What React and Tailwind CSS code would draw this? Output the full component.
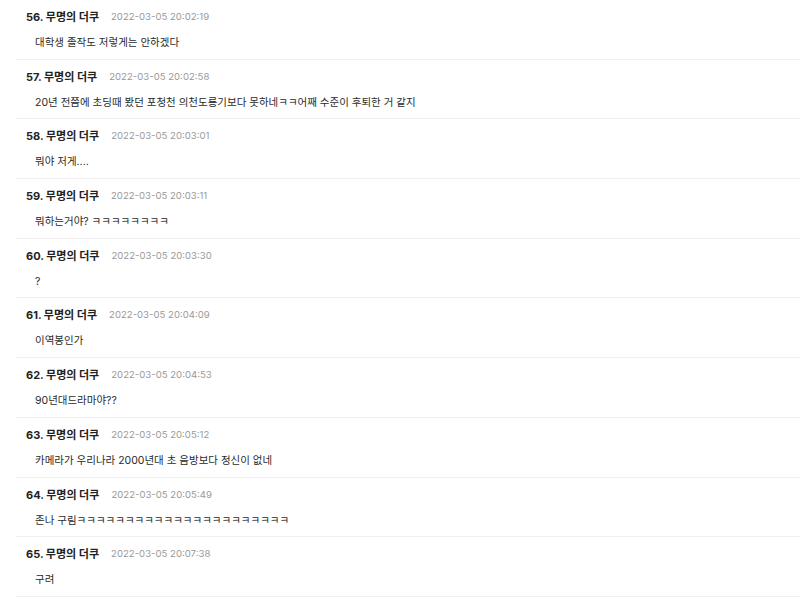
import React from 'react';

const comments = [
  { no: 56, time: "2022-03-05 20:02:19", text: "대학생 졸작도 저렇게는 안하겠다" },
  { no: 57, time: "2022-03-05 20:02:58", text: "20년 전쯤에 초딩때 봤던 포청천 의천도룡기보다 못하네ㅋㅋ어째 수준이 후퇴한 거 같지" },
  { no: 58, time: "2022-03-05 20:03:01", text: "뭐야 저게...." },
  { no: 59, time: "2022-03-05 20:03:11", text: "뭐하는거야? ㅋㅋㅋㅋㅋㅋㅋㅋ" },
  { no: 60, time: "2022-03-05 20:03:30", text: "?" },
  { no: 61, time: "2022-03-05 20:04:09", text: "이역봉인가" },
  { no: 62, time: "2022-03-05 20:04:53", text: "90년대드라마야??" },
  { no: 63, time: "2022-03-05 20:05:12", text: "카메라가 우리나라 2000년대 초 음방보다 정신이 없네" },
  { no: 64, time: "2022-03-05 20:05:49", text: "존나 구림ㅋㅋㅋㅋㅋㅋㅋㅋㅋㅋㅋㅋㅋㅋㅋㅋㅋㅋㅋㅋㅋㅋ" },
  { no: 65, time: "2022-03-05 20:07:38", text: "구려" },
];

export default function App() {
  return (
    <div className="w-[800px] h-[601px] overflow-hidden bg-white font-['Inter','Noto_Sans_CJK_KR',sans-serif]">
      <div className="ml-4">
        {comments.map((c) => (
          <div key={c.no} className="h-[59.7px] border-b border-[#f0f0f0] pl-[10px] pt-[10px]">
            <div className="flex items-center h-[14px] leading-[14px]">
              <span className="text-[11px] font-bold text-[#222]">{c.no}. 무명의 더쿠</span>
              <span className="ml-[12px] text-[9.6px] text-[#9a9a9a]">{c.time}</span>
            </div>
            <div className="mt-[12px] ml-[9px] h-[14px] leading-[14px] text-[10.5px] text-[#2a2a2a]">{c.text}</div>
          </div>
        ))}
      </div>
    </div>
  );
}
